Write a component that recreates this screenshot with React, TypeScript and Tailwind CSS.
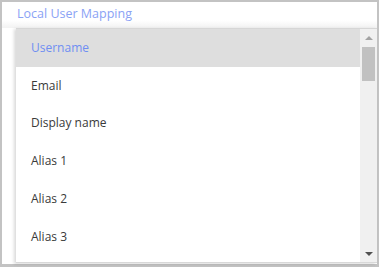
import React from "react";

const items = ["Username", "Email", "Display name", "Alias 1", "Alias 2", "Alias 3"];

export default function App() {
  return (
    <div className="w-[379px] h-[267px] bg-[#c3c3c3] pl-[2px] pt-[2px] pr-[2px] pb-[3px]" style={{ fontFamily: '"Open Sans", "Noto Sans", sans-serif' }}>
      <div className="w-full h-full bg-white flex flex-col">
        <div className="h-[26px] shrink-0 pl-[15px] pt-[4px] text-[12.5px] leading-[16px] text-[#8aa2f5] bg-gradient-to-b from-white from-70% to-[#f2f2f2]">
          Local User Mapping
        </div>
        <div className="flex-1 min-h-0 ml-[14px] flex border-t border-[#d6d6d6] shadow-[-2px_1px_3px_rgba(0,0,0,0.15)] border-b border-b-[#d8d8d8] mb-[1px]">
          <div className="flex-1 overflow-hidden">
            {items.map((it, i) => (
              <div
                key={it}
                className={
                  "h-[37.8px] flex items-center pl-[15px] text-[12px] " +
                  (i === 0 ? "bg-[#dedede] text-[#6f8ef2]" : "text-[#3a3a3a]")
                }
              >
                {it}
              </div>
            ))}
          </div>
          <div className="w-[17px] shrink-0 bg-[#f0f0f0] flex flex-col items-center relative">
            <div className="h-[17px] w-full flex items-center justify-center">
              <div className="w-0 h-0 border-l-[4px] border-r-[4px] border-b-[4px] border-l-transparent border-r-transparent border-b-[#a3a3a3]" />
            </div>
            <div className="w-[13px] h-[34px] bg-[#c1c1c1] mt-[1px]" />
            <div className="flex-1" />
            <div className="h-[17px] w-full flex items-center justify-center">
              <div className="w-0 h-0 border-l-[4px] border-r-[4px] border-t-[4px] border-l-transparent border-r-transparent border-t-[#505050]" />
            </div>
          </div>
        </div>
      </div>
    </div>
  );
}
